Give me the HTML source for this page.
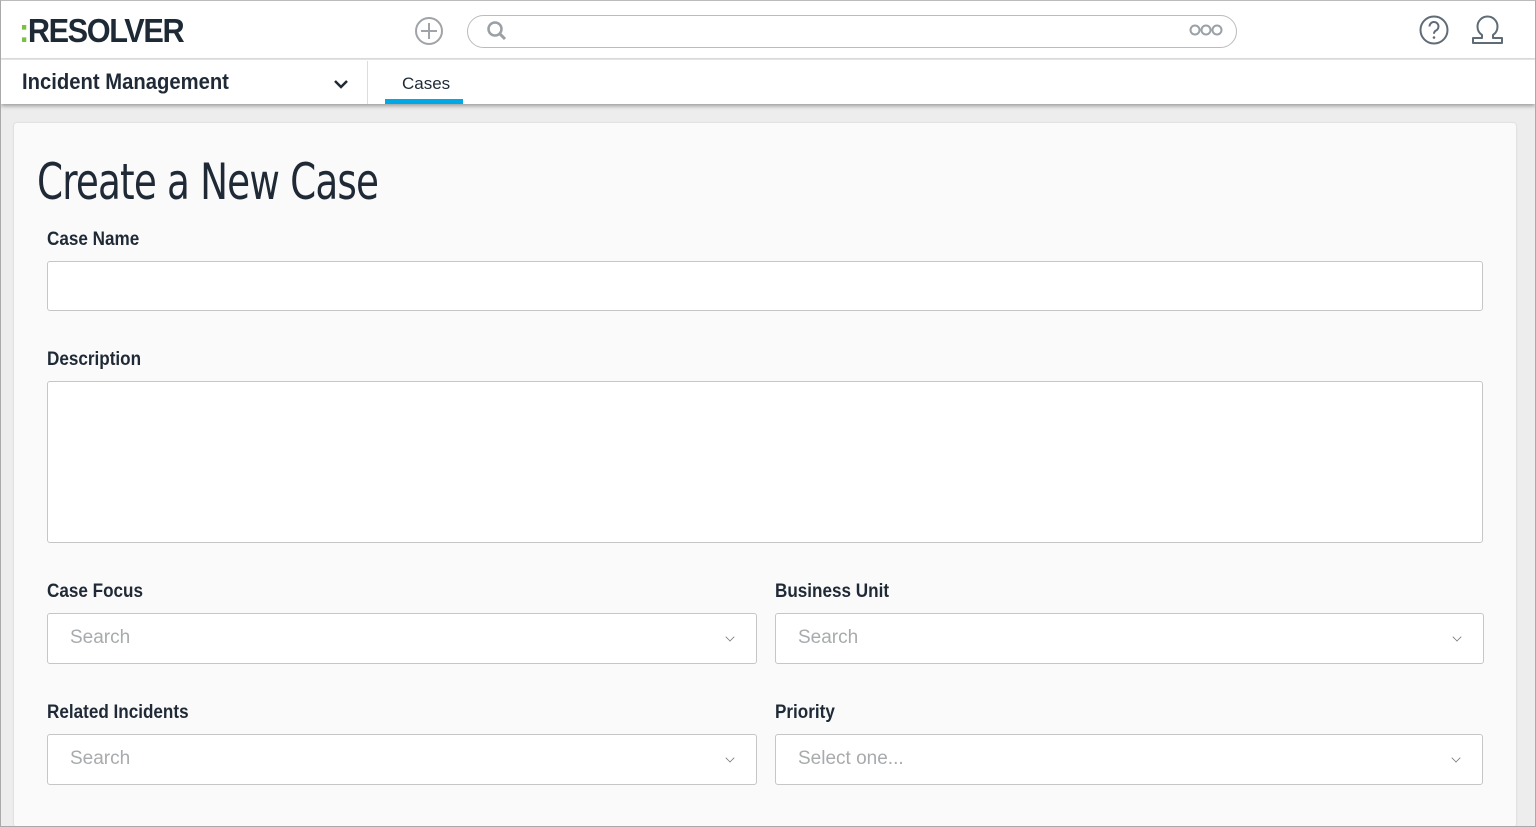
<!DOCTYPE html>
<html><head><meta charset="utf-8"><style>
*{box-sizing:border-box;margin:0;padding:0}
html,body{width:1536px;height:827px;overflow:hidden;background:#ededed;font-family:"Liberation Sans",sans-serif;color:#1f2a36;position:relative}
.frame{position:absolute;left:0;top:0;width:1536px;height:827px;border:1px solid #a9a9a9;border-top-color:#bbb}
.top{position:absolute;left:1px;top:1px;width:1534px;height:58px;background:#fff;border-bottom:1px solid #ddd}
.nav{position:absolute;left:1px;top:60px;width:1534px;height:44px;background:#fff;box-shadow:0 2px 4px rgba(0,0,0,.35)}
.logo{position:absolute;left:18px;top:11px;font-size:33px;font-weight:bold;letter-spacing:-1.5px;color:#1d2a36;transform:scaleX(.93);transform-origin:left}
.logo b{color:#7ac143}
.search{position:absolute;left:466px;top:14px;width:770px;height:33px;border:1px solid #bbb;border-radius:17px}
.card{position:absolute;left:14px;top:123px;width:1502px;height:704px;background:#fafafa;border-radius:3px;box-shadow:0 0 2px rgba(0,0,0,.15)}
h1{position:absolute;left:37px;top:153px;font-size:50px;color:#1f2a36;letter-spacing:-1px;transform:scaleX(.83);transform-origin:left;font-family:"DejaVu Sans Condensed","Liberation Sans Narrow",sans-serif;font-weight:200}
.lbl{position:absolute;font-size:19px;font-weight:bold;color:#1f2a36;transform:scaleX(.9);transform-origin:left}
.box{position:absolute;background:#fff;border:1px solid #c6c6c6;border-radius:3px}
.ph{position:absolute;left:22px;top:13px;font-size:19px;color:#a8abad}
.chev{position:absolute;right:22px;top:19px;width:8px;height:8px;border-right:1.3px solid #777;border-bottom:1.3px solid #777;transform:rotate(45deg) scale(.8)}
</style></head><body>
<div class="top">
<div class="logo"><b>:</b>RESOLVER</div>
<svg style="position:absolute;left:413px;top:15px" width="30" height="30"><circle cx="15" cy="15" r="13" fill="none" stroke="#a0a4a8" stroke-width="2"/><path d="M15 7v16M7 15h16" stroke="#a0a4a8" stroke-width="2"/></svg>
<div class="search"><svg style="position:absolute;left:18px;top:4px" width="22" height="22"><circle cx="9" cy="9" r="6.5" fill="none" stroke="#9aa0a5" stroke-width="2.5"/><path d="M14 14l5 5" stroke="#9aa0a5" stroke-width="3"/></svg>
<svg style="position:absolute;left:721px;top:7px" width="36" height="14"><g fill="none" stroke="#9aa0a5" stroke-width="2"><circle cx="6" cy="7" r="4.5"/><circle cx="17" cy="7" r="4.5"/><circle cx="28" cy="7" r="4.5"/></g></svg></div>
<svg style="position:absolute;left:1417px;top:13px" width="32" height="32"><circle cx="16" cy="16" r="13.5" fill="none" stroke="#5f6b76" stroke-width="2"/><path d="M11.5 12.5a4.5 4.5 0 1 1 6.5 4c-1.5.8-2 1.6-2 3.3" fill="none" stroke="#5f6b76" stroke-width="2"/><circle cx="16" cy="23.5" r="1.3" fill="#5f6b76"/></svg>
<svg style="position:absolute;left:1470px;top:13px" width="34" height="33"><path d="M11 21c-3-2-4.5-5-4.5-8.5a10 10 0 0 1 20 0c0 3.5-1.5 6.5-4.5 8.5v3h9v5H2v-5h9z" fill="none" stroke="#5f6b76" stroke-width="2" stroke-linejoin="round"/></svg>
</div>
<div class="nav">
<div style="position:absolute;left:21px;top:9px;font-size:22px;color:#1f2a36;font-weight:bold;transform:scaleX(.92);transform-origin:left">Incident Management</div>
<svg style="position:absolute;left:332px;top:18px" width="16" height="12"><path d="M2 3l6 6 6-6" fill="none" stroke="#1f2a36" stroke-width="2.5"/></svg>
<div style="position:absolute;left:366px;top:1px;width:1px;height:43px;background:#ddd"></div>
<div style="position:absolute;left:401px;top:14px;font-size:17px;color:#1f2a36">Cases</div>
<div style="position:absolute;left:384px;top:39px;width:78px;height:5px;background:#00a8e6"></div>
</div>
<div class="card"></div>
<h1>Create a New Case</h1>
<div class="lbl" style="left:47px;top:229px">Case Name</div>
<div class="box" style="left:47px;top:261px;width:1436px;height:50px"></div>
<div class="lbl" style="left:47px;top:349px">Description</div>
<div class="box" style="left:47px;top:381px;width:1436px;height:162px"></div>
<div class="lbl" style="left:47px;top:581px">Case Focus</div>
<div class="box" style="left:47px;top:613px;width:710px;height:51px"><span class="ph">Search</span><i class="chev"></i></div>
<div class="lbl" style="left:775px;top:581px">Business Unit</div>
<div class="box" style="left:775px;top:613px;width:709px;height:51px"><span class="ph">Search</span><i class="chev"></i></div>
<div class="lbl" style="left:47px;top:702px">Related Incidents</div>
<div class="box" style="left:47px;top:734px;width:710px;height:51px"><span class="ph">Search</span><i class="chev"></i></div>
<div class="lbl" style="left:775px;top:702px">Priority</div>
<div class="box" style="left:775px;top:734px;width:708px;height:51px"><span class="ph">Select one...</span><i class="chev"></i></div>
<div class="frame"></div>
</body></html>
